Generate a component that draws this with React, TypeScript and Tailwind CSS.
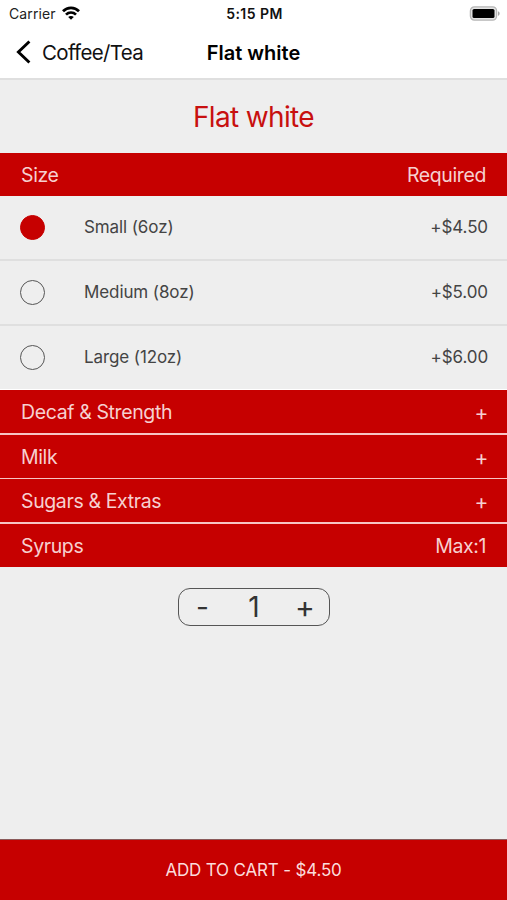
import { useState } from 'react'

interface SizeOption {
  label: string
  price: number
}

interface SectionBarProps {
  title: string
  note: string
}

const sizes: SizeOption[] = [
  { label: 'Small (6oz)', price: 4.5 },
  { label: 'Medium (8oz)', price: 5 },
  { label: 'Large (12oz)', price: 6 },
]

function StatusBar() {
  return (
    <div className="grid h-[27px] grid-cols-3 items-center pl-[9px] pr-[7px] text-sm text-[#222]">
      <div className="flex items-center gap-[6px]">
        <span className="tracking-[0.1px]">Carrier</span>
        <svg className="-mt-[2px] h-[14px] w-[18px]" viewBox="0 0 18 14" fill="none" stroke="#000" strokeWidth="2.7">
          <path d="M1 5.3C5.4.7 12.6.7 17 5.3" />
          <path d="M4 8.6c2.8-2.8 7.2-2.8 10 0" />
          <path d="M9 13.8 6.2 11c1.5-1.5 4.1-1.5 5.6 0z" fill="#000" stroke="none" />
        </svg>
      </div>
      <span className="text-center font-semibold tracking-[0.45px] text-[#111]">5:15 PM</span>
      <svg className="-mt-px h-[15px] w-[31px] justify-self-end" viewBox="0 0 31 15">
        <rect x="1.4" y="0.9" width="26.2" height="13.2" rx="4" fill="#e4e4e4" stroke="#b5b5b5" strokeWidth="1.3" />
        <rect x="3.5" y="3" width="22" height="9" rx="1.6" fill="#000" />
        <path d="M29 5.2c2.2.8 2.2 3.8 0 4.6z" fill="#a5a5a5" />
      </svg>
    </div>
  )
}

function NavBar() {
  return (
    <div className="grid h-[51px] grid-cols-3 items-center px-4 text-[#111]">
      <button className="flex items-center gap-[11px]">
        <svg className="-mt-px h-6 w-[15px] shrink-0" viewBox="0 0 15 24" fill="none" stroke="#000" strokeWidth="2.9">
          <path d="M13.4 1.5 2.4 12l11 10.5" />
        </svg>
        <span className="whitespace-nowrap pt-[2px] text-[20.5px] tracking-[-0.65px]">Coffee/Tea</span>
      </button>
      <span className="whitespace-nowrap text-center text-xl font-semibold text-black">Flat white</span>
    </div>
  )
}

function SectionBar({ title, note }: SectionBarProps) {
  return (
    <div className="flex h-[43px] items-center justify-between bg-[#c60000] px-[21px] pt-[3px] text-[19.5px] tracking-[-0.38px] text-[#f6d0d0]">
      <span>{title}</span>
      <span className={note === '+' ? '-mr-[2px] text-[21px]' : ''}>{note}</span>
    </div>
  )
}

export default function App() {
  const [selected, setSelected] = useState(0)
  const [quantity, setQuantity] = useState(1)

  const total = (sizes[selected].price * quantity).toFixed(2)

  return (
    <div className="flex h-[900px] w-full flex-col bg-[#eee] font-['Inter','Liberation_Sans',sans-serif]">
      <header className="h-20 shrink-0 border-b-2 border-[#dfdfdf] bg-white">
        <StatusBar />
        <NavBar />
      </header>

      <main className="flex-1">
        <h1 className="flex h-[73px] items-center justify-center text-[28px] tracking-[-0.65px] text-[#c8100f]">
          Flat white
        </h1>

        <SectionBar title="Size" note="Required" />
        <div>
          {sizes.map((size, index) => (
            <button
              key={size.label}
              onClick={() => setSelected(index)}
              className="flex h-[65px] w-full items-center border-b-2 border-[#dfdfdf] pl-5 pr-[19px] text-[17px] tracking-[-0.1px] text-[#444] last:h-16 last:border-b last:border-white"
            >
              <span
                className={`mr-[39px] size-[25px] rounded-full border-[1.5px] ${
                  selected === index ? 'border-[#c60000] bg-[#c60000]' : 'border-[#555]'
                }`}
              />
              <span>{size.label}</span>
              <span className="ml-auto">+${size.price.toFixed(2)}</span>
            </button>
          ))}
        </div>

        <div className="flex flex-col gap-[1.5px] bg-[#f7c4c4]">
          <SectionBar title="Decaf & Strength" note="+" />
          <SectionBar title="Milk" note="+" />
          <SectionBar title="Sugars & Extras" note="+" />
          <SectionBar title="Syrups" note="Max:1" />
        </div>

        <div className="mx-auto mt-[21px] grid h-[38px] w-[152px] grid-cols-3 items-center rounded-xl border-[1.5px] border-[#555] text-[28px] leading-none text-[#333]">
          <button className="pr-[2px]" onClick={() => setQuantity(Math.max(1, quantity - 1))}>-</button>
          <span className="pl-px text-center">{quantity}</span>
          <button className="pl-[3px] text-[30px]" onClick={() => setQuantity(quantity + 1)}>+</button>
        </div>
      </main>

      <button className="h-[61px] shrink-0 border-t border-[#8a5a5a] bg-[#c60000] pt-[2px] text-[17px] tracking-[-0.17px] text-[#fbdcdc]">
        ADD TO CART - ${total}
      </button>
    </div>
  )
}
